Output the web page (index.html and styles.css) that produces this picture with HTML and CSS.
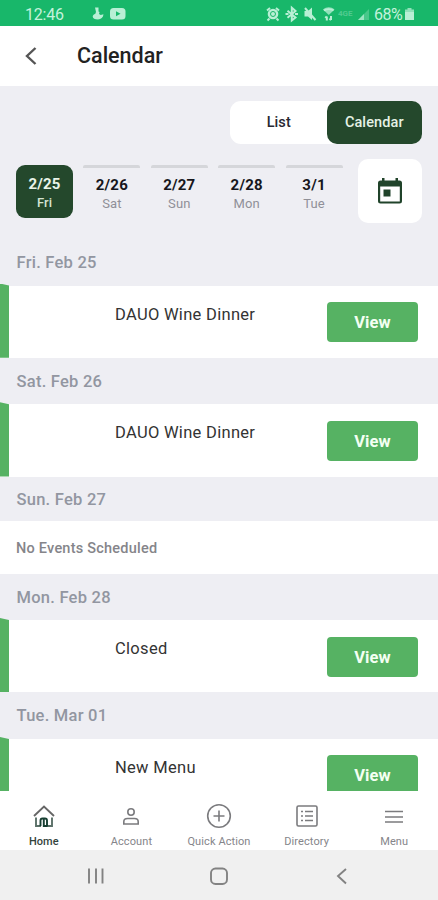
FILE: index.html
```html
<!DOCTYPE html>
<html lang="en">
<head>
<meta charset="utf-8">
<title>Calendar</title>
<link rel="stylesheet" href="styles.css">
</head>
<body>
<div class="app">
  <div class="status">
    <span class="clock">12:46</span>
    <svg class="notices" width="36" height="16" viewBox="0 0 36 16">
      <path d="M5 1.500h3.500v4l1 .5-.5 2 1.700 1 2.800-.7c-.3 3.300-2.500 5.200-5.500 5.200-3.200 0-5.300-1-5.300-2.900 0-1.500 1-2.400 2.500-2.700L6 6z"/>
      <rect x="20" y="2" width="15.500" height="11.500" rx="3.500"/>
      <path class="cut" d="M26 5.200v5l4.500-2.500z"/>
    </svg>
    <svg class="indicators" width="104" height="18" viewBox="0 0 104 18">
      <circle cx="7" cy="9" r="5.300"/><path class="line" d="M1 5.500 4 3M13 5.500 10 3M3.500 13.500 1.500 15.500M10.500 13.500 12.500 15.500"/><path class="cut-line" d="M4.500 9a2.500 2.500 0 1 1 5 0 2.500 2.500 0 0 1-5 0"/>
      <path class="line" d="m21.500 5.700 8 6.800-3.700 3V2.700l3.700 3.200-8 6.800M19.500 9h3M29 9h3"/>
      <path d="M38.500 6h3.500l4-3.500v12.500l-4-3.500h-3.500z"/><path class="line" d="m39 3 10.500 12"/>
      <path class="soft" d="M57 4.500c3.500-3 8-3 11.500 0L62.800 10z"/><path class="line" d="M58 5.500c2.700-1.800 6.800-1.800 9.500 0M60.800 15.500v-4m-1.500 1.500 1.500-1.700M65 11v4m-1.500-1.500 1.500 1.700"/>
      <text class="carrier" x="72" y="11">4GE</text>
      <path class="faint" d="M92 15h11V4z"/><path class="soft" d="M92 15h6V9z"/>
    </svg>
    <span class="percent">68%</span>
    <svg class="battery" width="9" height="14" viewBox="0 0 9 14"><path class="soft" d="M2.500 1h4v1.500H9V6H0V2.500h2.500z"/><path d="M0 5h9v8H0z"/></svg>
  </div>

  <header class="header">
    <svg class="back" width="12" height="20" viewBox="0 0 12 20"><path d="M10.500 2 2 10l8.500 8"/></svg>
    <h1 class="title">Calendar</h1>
  </header>

  <main class="content">
    <div class="controls">
      <div class="toggle"><span class="option">List</span><span class="option selected">Calendar</span></div>
    </div>
    <div class="picker">
      <div class="day active"><b class="date">2/25</b><span class="weekday">Fri</span></div>
      <div class="day"><b class="date">2/26</b><span class="weekday">Sat</span></div>
      <div class="day"><b class="date">2/27</b><span class="weekday">Sun</span></div>
      <div class="day"><b class="date">2/28</b><span class="weekday">Mon</span></div>
      <div class="day"><b class="date">3/1</b><span class="weekday">Tue</span></div>
      <div class="open-calendar">
        <svg width="24" height="28" viewBox="0 0 24 28"><path fill-rule="evenodd" d="M4 1h2.500v2.500h11V1H20v2.500h1.500Q24 3.500 24 6v18Q24 26.500 21.500 26.500h-19Q0 26.500 0 24V6Q0 3.500 2.500 3.500H4zM2.200 9.500v15h19.600v-15z"/><path d="M5.500 12.500h7v7h-7z"/></svg>
      </div>
    </div>

    <h2 class="heading first">Fri. Feb 25</h2>
    <div class="event"><i class="accent"></i><span class="name">DAUO Wine Dinner</span><span class="view">View</span></div>
    <h2 class="heading">Sat. Feb 26</h2>
    <div class="event"><i class="accent"></i><span class="name">DAUO Wine Dinner</span><span class="view">View</span></div>
    <h2 class="heading short">Sun. Feb 27</h2>
    <div class="empty">No Events Scheduled</div>
    <h2 class="heading">Mon. Feb 28</h2>
    <div class="event"><i class="accent"></i><span class="name">Closed</span><span class="view">View</span></div>
    <h2 class="heading">Tue. Mar 01</h2>
    <div class="event"><i class="accent"></i><span class="name">New Menu</span><span class="view">View</span></div>
  </main>

  <nav class="tabs">
    <div class="tab current"><svg width="24" height="26" viewBox="0 0 24 26"><path class="roof" d="M2 13 12 3.500 22 13"/><path class="wall" d="M4 14.500V23h5M15 23h5v-8.500"/><path d="M8.500 23v-5.500q0-2 2-2h2.500q2 0 2 2V23M11.800 16v7h3.700"/></svg><span>Home</span></div>
    <div class="tab"><svg width="24" height="26" viewBox="0 0 24 26"><circle cx="12" cy="9" r="3.200"/><path d="M4.800 21v-2.300q0-3.200 3.700-3.200h7q3.700 0 3.700 3.200V21z"/></svg><span>Account</span></div>
    <div class="tab"><svg width="26" height="26" viewBox="0 0 26 26"><circle cx="13" cy="13" r="11.300"/><path d="M13 7.500v11M7.500 13h11"/></svg><span>Quick Action</span></div>
    <div class="tab"><svg width="24" height="26" viewBox="0 0 24 26"><rect x="2" y="3" width="20" height="20" rx="1.500"/><path d="M6 8.500h2M10 8.500h8M6 13h2M10 13h8M6 17.500h2M10 17.500h8"/></svg><span>Directory</span></div>
    <div class="tab"><svg width="24" height="26" viewBox="0 0 24 26"><path d="M3 8.500h18M3 14h18M3 19h18"/></svg><span>Menu</span></div>
  </nav>

  <div class="system">
    <svg width="20" height="20" viewBox="0 0 20 20"><path d="M3 2.500v15M10 2.500v15M16.500 2.500v15"/></svg>
    <svg width="20" height="20" viewBox="0 0 20 20"><rect x="2" y="2.500" width="16" height="15.500" rx="4.500"/></svg>
    <svg width="20" height="20" viewBox="0 0 20 20"><path d="M14 3 6 10l8 7.500"/></svg>
  </div>
</div>
</body>
</html>
```
FILE: styles.css
```css
* { box-sizing: border-box; }
body { margin: 0; font-family: Roboto, sans-serif; background: #fff; }
h1, h2 { margin: 0; }
svg { display: block; flex: none; }
.app { width: 438px; height: 900px; display: flex; flex-direction: column; overflow: hidden; }

.status { height: 26px; flex: none; display: flex; align-items: center; padding: 2px 0 0 25px; background: #18b76a; color: #c4f2dc; }
.status svg { fill: #b9efd5; }
.clock { width: 65px; font-size: 16px; letter-spacing: -.2px; }
.notices { margin-right: 140px; }
.status .cut { fill: #18b76a; }
.status .line { fill: none; stroke: #b9efd5; stroke-width: 2; }
.status .cut-line { fill: none; stroke: #18b76a; stroke-width: 1; }
.status .soft { opacity: .75; }
.status .faint { opacity: .3; }
.carrier { font-size: 8px; font-weight: 700; opacity: .35; }
.percent { margin-left: 4px; width: 31px; font-size: 16px; letter-spacing: -.5px; }

.header { height: 60px; flex: none; display: flex; align-items: center; padding-left: 25px; }
.back { fill: none; stroke: #555; stroke-width: 2.4; }
.title { margin-left: 40px; font-size: 21.500px; line-height: 28px; font-weight: 500; color: #222; letter-spacing: 0; }

.content { height: 705px; flex: none; overflow: hidden; background: #eeeef3; }
.controls { display: flex; justify-content: flex-end; padding: 15px 16px 0 0; }
.toggle { width: 192px; height: 42.500px; display: flex; border-radius: 11px; background: #fff; }
.option { flex: 1; display: flex; align-items: center; justify-content: center; padding: 1px 0 0 1px; font-size: 14.500px; font-weight: 500; color: #282832; letter-spacing: .1px; }
.option.selected { padding-left: 0; border-radius: 10px; background: #24482c; color: #e6f2e5; }
.picker { display: flex; padding: 15px 16px 0; }
.day { width: 57px; height: 53px; margin: 6px 10.400px 0 0; padding-top: 7px; display: flex; flex-direction: column; align-items: center; border-top: 3px solid #d5d6da; border-radius: 2px; }
.date { font-size: 15px; line-height: 20px; letter-spacing: .2px; color: #17171c; }
.weekday { font-size: 13px; line-height: 17px; letter-spacing: .1px; color: #909098; }
.day.active { padding-top: 9px; border: 0; border-radius: 9px; background: #24482c; }
.active .date { color: #eaf4e8; }
.active .weekday { color: #d5e3d3; font-weight: 500; }
.open-calendar { width: 64px; height: 64px; margin-left: auto; display: flex; align-items: center; justify-content: center; border-radius: 10px; background: #fff; }
.open-calendar svg { fill: #20432a; }

.heading { height: 46.500px; padding-left: 16.500px; font-size: 16.500px; line-height: 47px; font-weight: 500; letter-spacing: .25px; color: #9296a1; }
.heading.first { height: 63px; line-height: 79px; }
.heading.short { height: 44px; line-height: 45px; }
.event { height: 72.300px; display: flex; background: #fff; }
.accent { width: 9px; margin-top: -2px; background: #56b263; clip-path: polygon(0 0, 100% 2px, 100% 100%, 0 100%); }
.name { width: 211px; margin-left: 106px; padding-top: 18px; font-size: 16.500px; line-height: 22px; letter-spacing: .3px; color: #333; }
.view { width: 91px; height: 40px; margin: 16.500px 0 0 1px; border-radius: 4px; background: #56b263; color: #f3fff2; font-size: 16.500px; line-height: 41px; font-weight: 700; text-align: center; letter-spacing: .1px; }
.empty { height: 53px; padding-left: 16px; background: #fff; color: #85858a; font-size: 14.500px; line-height: 55px; font-weight: 500; letter-spacing: .23px; }

.tabs { height: 59px; flex: none; display: grid; grid-template-columns: repeat(5, 1fr); padding-top: 12px; background: #fff; }
.tab { display: flex; flex-direction: column; align-items: center; font-size: 11px; line-height: 14px; letter-spacing: .1px; color: #85858a; white-space: nowrap; }
.tab span { margin-top: 6px; }
.tab svg { fill: none; stroke: #7b7b7e; stroke-width: 1.6; }
.tab.current { color: #34443d; font-weight: 500; letter-spacing: 0; }
.tab.current svg { stroke: #173f32; stroke-width: 1.900; }
.tab.current .roof { stroke: #666; }
.tab.current .wall { stroke: #5b7068; }
.system { height: 50px; flex: none; display: flex; align-items: center; justify-content: space-between; padding: 1px 86px 0; background: #f0f0f0; }
.system svg { fill: none; stroke: #828282; stroke-width: 1.900; }
```
